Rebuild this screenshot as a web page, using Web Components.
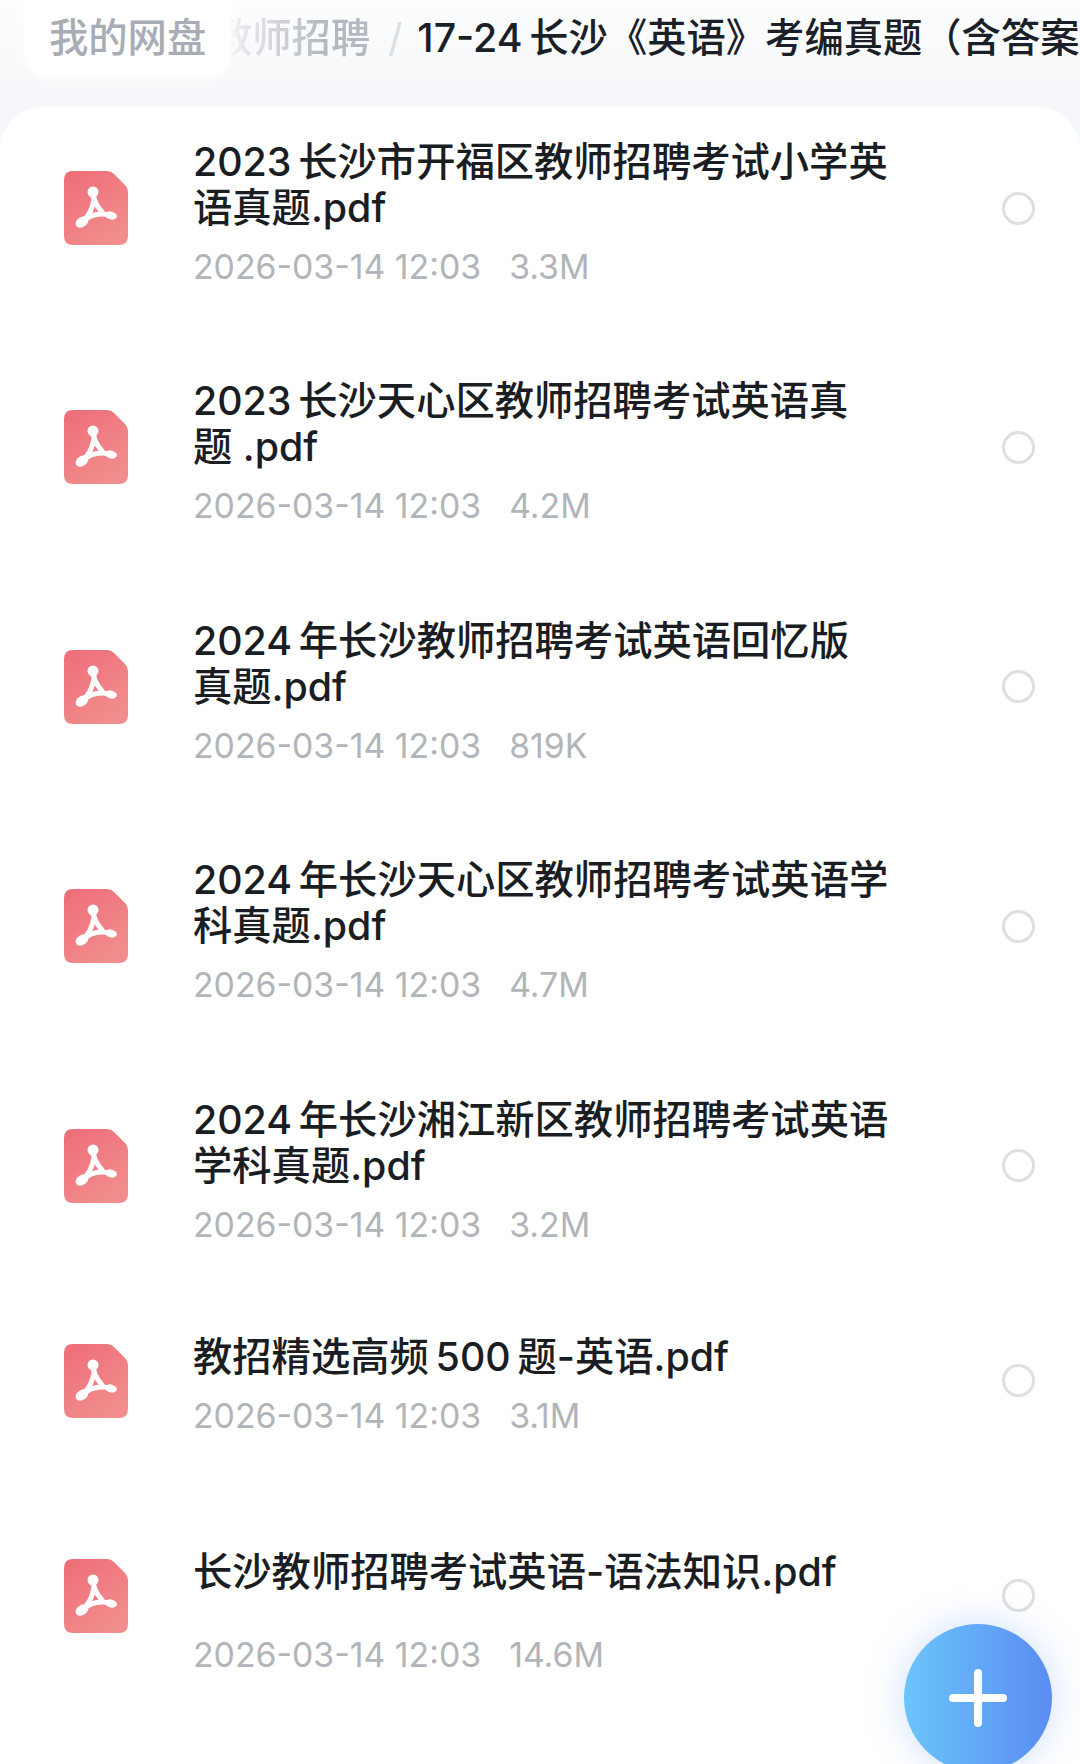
<!DOCTYPE html>
<html lang="zh">
<head>
<meta charset="utf-8">
<title>17-24 长沙《英语》考编真题</title>
<style>
  html, body { margin: 0; height: 1764px; overflow: hidden; }
  body {
    background: #f5f7fa;
    font-family: Inter, "Noto Sans CJK SC", sans-serif;
    position: relative;
  }
</style>
</head>
<body>
<path-bar current="17-24&#8201;长沙《英语》考编真题（含答案）"></path-bar>
<file-list>
  <file-row name="2023&#8201;长沙市开福区教师招聘考试小学英&#10;语真题.pdf" size="3.3M"></file-row>
  <file-row name="2023&#8201;长沙天心区教师招聘考试英语真&#10;题 .pdf" size="4.2M"></file-row>
  <file-row name="2024&#8201;年长沙教师招聘考试英语回忆版&#10;真题.pdf" size="819K"></file-row>
  <file-row name="2024&#8201;年长沙天心区教师招聘考试英语学&#10;科真题.pdf" size="4.7M"></file-row>
  <file-row name="2024&#8201;年长沙湘江新区教师招聘考试英语&#10;学科真题.pdf" size="3.2M"></file-row>
  <file-row short name="教招精选高频&#8201;500&#8201;题-英语.pdf" size="3.1M"></file-row>
  <file-row short last name="长沙教师招聘考试英语-语法知识.pdf" size="14.6M"></file-row>
</file-list>
<add-button></add-button>

<script>
class PathBar extends HTMLElement {
  constructor() {
    super();
    this.attachShadow({ mode: 'open' });
    this.shadowRoot.innerHTML = `
      <style>
        :host {
          display: flex;
          align-items: flex-start;
          height: 107px;
          overflow: hidden;
          white-space: nowrap;
          font-size: 39.3px;
          font-weight: 500;
          background: linear-gradient(#fcfdfe, #f5f7fa);
        }
        .home {
          position: relative;
          z-index: 1;
          flex: none;
          height: 76px;
          line-height: 76px;
          margin-left: 24px;
          padding: 0 25px;
          box-sizing: border-box;
          width: 207px;
          border-radius: 0 0 24px 24px;
          background: #fff;
          box-shadow: 0 0 14px rgba(255,255,255,.9);
          color: #a8acb5;
        }
        .parent {
          flex: none;
          margin-left: -18px;
          line-height: 76px;
          color: #b4b8c0;
          -webkit-mask-image: linear-gradient(90deg, rgba(0,0,0,.15) 10%, #000 70%);
          mask-image: linear-gradient(90deg, rgba(0,0,0,.15) 10%, #000 70%);
        }
        .sep { flex: none; margin: 0 15px 0 18px; line-height: 76px; font-weight: 400; color: #dcdee3; }
        .current { flex: none; line-height: 76px; color: #1b1f27; }
      </style>
      <div class="home">我的网盘</div>
      <div class="parent">教师招聘</div>
      <div class="sep">/</div>
      <div class="current"></div>
    `;
  }

  connectedCallback() {
    this.shadowRoot.querySelector('.current').textContent = this.getAttribute('current');
  }
}

class FileList extends HTMLElement {
  constructor() {
    super();
    this.attachShadow({ mode: 'open' });
    this.shadowRoot.innerHTML = `
      <style>
        :host {
          display: flex;
          flex-direction: column;
          gap: 37.4px;
          height: 1657px;
          box-sizing: border-box;
          background: #fff;
          border-radius: 44px 44px 0 0;
        }
      </style>
      <slot></slot>
    `;
  }
}

class PdfIcon extends HTMLElement {
  constructor() {
    super();
    this.attachShadow({ mode: 'open' });
    this.shadowRoot.innerHTML = `
      <style>
        :host { display: block; width: 64px; height: 74px; flex: none; }
        svg { display: block; }
      </style>
      <svg width="64" height="74" viewBox="0 0 64 74">
        <defs>
          <linearGradient id="pdf" x1="0" y1="0" x2="0.6" y2="1">
            <stop offset="0" stop-color="#ee6c78"/>
            <stop offset="1" stop-color="#f18d8d"/>
          </linearGradient>
        </defs>
        <path d="M9 0H43Q47 0 50 3L61 14Q64 17 64 21V65Q64 74 55 74H9Q0 74 0 65V9Q0 0 9 0Z" fill="url(#pdf)"/>
        <g fill="none" stroke="#fff" stroke-width="5" stroke-linecap="round">
          <path d="M29 21C29 27 31 33 38 41"/>
          <path d="M30 28C29 36 25 45 18 51"/>
          <path d="M18 51C26 44 36 41 47 44.5"/>
        </g>
        <circle cx="29" cy="21" r="5.5" fill="#fff"/>
        <ellipse cx="18" cy="51" rx="7" ry="5" transform="rotate(-35 18 51)" fill="#fff"/>
        <ellipse cx="47" cy="44.5" rx="6" ry="4" transform="rotate(15 47 44.5)" fill="#fff"/>
      </svg>
    `;
  }
}

class FileRow extends HTMLElement {
  constructor() {
    super();
    this.attachShadow({ mode: 'open' });
    this.shadowRoot.innerHTML = `
      <style>
        :host {
          display: flex;
          align-items: center;
          height: 202px;
          padding: 0 45px 0 64px;
          box-sizing: border-box;
        }
        :host([short]) { height: 154px; }
        :host([last]) { margin-top: 23.5px; }
        .text {
          align-self: flex-start;
          flex: 1;
          margin-left: 65px;
          padding-top: 32px;
        }
        :host([short]) .text { padding-top: 30px; }
        .name {
          font-size: 39.3px;
          line-height: 46px;
          font-weight: 500;
          color: #1a1d22;
          white-space: pre-line;
        }
        .meta {
          display: flex;
          gap: 28px;
          margin-top: 16px;
          font-size: 33.8px;
          line-height: 40px;
          color: #b1b5ba;
        }
        :host([last]) .meta { margin-top: 40px; }
        .radio {
          flex: none;
          width: 33px;
          height: 33px;
          box-sizing: border-box;
          border: 3.5px solid #dedfe0;
          border-radius: 50%;
        }
      </style>
      <pdf-icon></pdf-icon>
      <div class="text">
        <div class="name"></div>
        <div class="meta"><span class="date">2026-03-14 12:03</span><span class="size"></span></div>
      </div>
      <div class="radio"></div>
    `;
  }

  connectedCallback() {
    this.shadowRoot.querySelector('.name').textContent = this.getAttribute('name');
    this.shadowRoot.querySelector('.size').textContent = this.getAttribute('size');
  }
}

class AddButton extends HTMLElement {
  constructor() {
    super();
    this.attachShadow({ mode: 'open' });
    this.shadowRoot.innerHTML = `
      <style>
        :host {
          position: absolute;
          left: 904px;
          top: 1624px;
          width: 148px;
          height: 148px;
          border-radius: 50%;
          background: linear-gradient(90deg, #6bc5fb, #5a8cf2);
          box-shadow: 0 0 40px rgba(92,150,245,.3);
        }
        svg { display: block; }
      </style>
      <svg width="148" height="148" viewBox="0 0 148 148">
        <path d="M49 74H99M74 49V99" stroke="#fff" stroke-width="8" stroke-linecap="round"/>
      </svg>
    `;
  }
}

customElements.define('path-bar', PathBar);
customElements.define('file-list', FileList);
customElements.define('pdf-icon', PdfIcon);
customElements.define('file-row', FileRow);
customElements.define('add-button', AddButton);
</script>
</body>
</html>
